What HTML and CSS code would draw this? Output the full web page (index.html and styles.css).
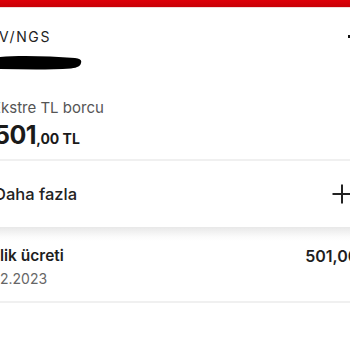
FILE: index.html
```html
<!DOCTYPE html>
<html lang="tr">
<head>
<meta charset="utf-8">
<link rel="stylesheet" href="styles.css">
</head>
<body>
<div class="topbar"></div>
<div class="card">
  <div class="head">
    <div class="brand">V/NGS</div>
    <span class="dot"></span>
  </div>
  <svg class="scribble" width="84" height="16" viewBox="0 0 84 16">
    <path d="M0 2 C20 0 50 1 76 3 C81 3.5 83 5 82 8 C81.5 11 79 12.5 72 13.5 C50 15 25 14.5 0 14 Z" fill="#000"/>
  </svg>
  <div class="label">Ekstre TL borcu</div>
  <div class="amount"><span class="big">501</span><span class="small">,00 TL</span></div>
  <div class="divider"></div>
  <div class="more">
    <span class="more-text">Daha fazla</span>
    <svg class="plus" width="20" height="20" viewBox="0 0 20 20"><path d="M10 0.5V19.5M0.5 10H19.5" stroke="#222" stroke-width="2"/></svg>
  </div>
</div>
<div class="shadow"></div>
<div class="row">
  <div class="row-left">
    <div class="row-title">lik ücreti</div>
    <div class="row-date">2.2023</div>
  </div>
  <div class="row-amount">501,00 TL</div>
</div>
<div class="divider2"></div>
</body>
</html>
```
FILE: styles.css
```css
html, body {
  margin: 0;
  padding: 0;
  background: #fff;
  overflow: hidden;
  width: 350px;
  height: 350px;
  font-family: Inter, "Noto Sans", sans-serif;
  color: #1e1e1e;
}
.topbar {
  height: 7px;
  background: linear-gradient(#de0008, #c80006);
  border-bottom: 1px solid #f4dada;
}
.card {
  margin: 0 -2px 0 -7px;
}
.head {
  display: flex;
  justify-content: space-between;
  align-items: flex-start;
  margin-top: 21px;
}
.brand {
  margin-left: 6px;
  font-size: 14px;
  line-height: 16px;
  letter-spacing: 1.6px;
  font-weight: 400;
  color: #222;
}
.dot {
  width: 3px;
  height: 3px;
  background: #111;
  margin-top: 6px;
  margin-right: 1px;
}
.scribble {
  display: block;
  margin: 10px 0 0 6px;
}
.label {
  margin-top: 28px;
  margin-left: -1px;
  font-size: 15px;
  line-height: 18px;
  color: #555;
}
.amount {
  margin-top: 4px;
  line-height: 28px;
  padding-bottom: 6px;
  font-weight: 700;
  color: #1a1a1a;
  margin-left: 1px;
}
.big {
  font-size: 25px;
  letter-spacing: -0.5px;
}
.small {
  font-size: 14px;
}
.divider {
  height: 2px;
  background: #f0f0f0;
}
.more {
  height: 66px;
  display: flex;
  align-items: center;
  justify-content: space-between;
  margin-left: 1px;
}
.more-text {
  font-size: 16.5px;
  font-weight: 500;
  color: #222;
}
.plus {
  display: block;
}
.shadow {
  height: 14px;
  background: linear-gradient(#e8e8e8, #fbfbfb 70%, #fff);
}
.row {
  display: flex;
  justify-content: space-between;
  align-items: flex-start;
  padding-top: 5px;
  height: 55px;
  margin-right: -32px;
}
.row-title {
  font-size: 15.5px;
  line-height: 20px;
  font-weight: 600;
  color: #1e1e1e;
}
.row-date {
  margin-top: 4px;
  font-size: 14px;
  line-height: 18px;
  color: #666;
}
.row-amount {
  font-size: 16px;
  line-height: 20px;
  font-weight: 600;
  color: #1e1e1e;
}
.divider2 {
  height: 2px;
  background: #f0f0f0;
}
```
